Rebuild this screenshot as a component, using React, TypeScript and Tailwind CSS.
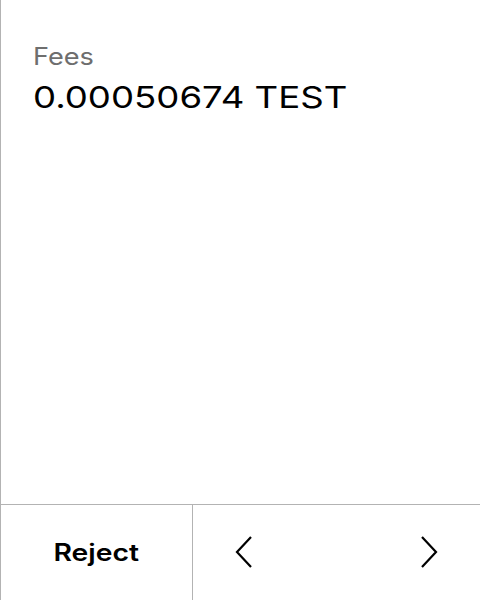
export default function App() {
  return (
    <div className="flex h-[600px] w-[480px] flex-col border-l border-[#b3b3b3] bg-white font-['Inter',sans-serif] text-black">
      {/* Details */}
      <div className="flex flex-1 flex-col items-start px-8 pt-[42px]">
        <div className="w-fit origin-left scale-x-[1.13] text-[24px] leading-[30px] text-[#6e6e6e]">Fees</div>
        <div className="mt-[7px] w-fit origin-left scale-x-[1.22] text-[30px] leading-[36px]">0.00050674 TEST</div>
      </div>

      {/* Actions */}
      <div className="flex h-[96px] border-t border-[#b3b3b3]">
        <button className="flex w-[192px] items-center justify-center border-r border-[#b3b3b3]">
          <span className="scale-x-[1.18] text-[24px] font-semibold">Reject</span>
        </button>
        <div className="flex flex-1 items-center justify-between px-[42px] pb-[2px]">
          <svg width="18" height="32" viewBox="0 0 18 32" fill="none" stroke="black" strokeWidth="2.2">
            <polyline points="16,1 2,16 16,31" />
          </svg>
          <svg width="18" height="32" viewBox="0 0 18 32" fill="none" stroke="black" strokeWidth="2.2">
            <polyline points="2,1 16,16 2,31" />
          </svg>
        </div>
      </div>
    </div>
  );
}
